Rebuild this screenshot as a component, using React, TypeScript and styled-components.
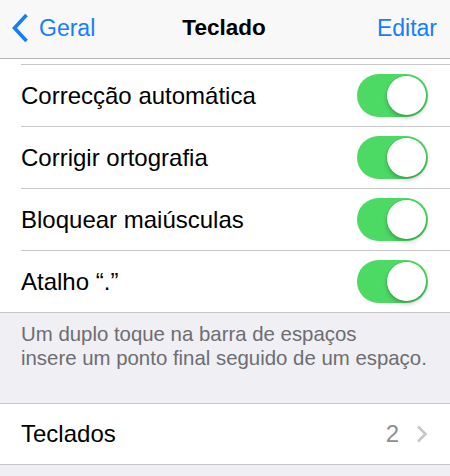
import React from 'react';
import styled, { createGlobalStyle } from 'styled-components';

const GlobalStyle = createGlobalStyle`
  html, body {
    margin: 0;
    padding: 0;
    background-color: #efeff4;
    font-family: "Liberation Sans", Arial, Helvetica, sans-serif;
    -webkit-font-smoothing: antialiased;
  }
  * {
    box-sizing: border-box;
  }
`;

const Screen = styled.div`
  width: 450px;
  height: 476px;
  display: flex;
  flex-direction: column;
  background-color: #efeff4;
  overflow: hidden;
`;

const NavBar = styled.div`
  flex: 0 0 auto;
  height: 59px;
  display: grid;
  grid-template-columns: 1fr auto 1fr;
  align-items: center;
  padding: 0 13px 2px 11px;
  background-color: #f8f8f8;
  border-bottom: 1px solid #b4b4b4;
  position: relative;
  z-index: 1;
`;

const BackButton = styled.div`
  display: flex;
  align-items: center;
  gap: 10px;
  color: #157efb;
  font-size: 23px;
`;

const NavTitle = styled.div`
  font-size: 22.5px;
  font-weight: bold;
  color: #000;
`;

const NavAction = styled.div`
  justify-self: end;
  color: #157efb;
  font-size: 23px;
`;

const ScrollArea = styled.div`
  flex: 1 1 auto;
  overflow: hidden;
`;

const ScrollContent = styled.div`
  /* list is scrolled: the first row sits mostly under the nav bar */
  margin-top: -56px;
`;

const Group = styled.div<{ $noTop?: boolean }>`
  background-color: #fff;
  border-top: ${({ $noTop }) => ($noTop ? 'none' : '1px solid #c8c7cc')};
  border-bottom: 1px solid #c8c7cc;
`;

const Row = styled.div`
  padding-left: 21px;
  background-color: #fff;
`;

const RowInner = styled.div<{ $last?: boolean; $height?: number }>`
  height: ${({ $height }) => $height ?? 62}px;
  display: flex;
  align-items: center;
  justify-content: space-between;
  padding-right: 22px;
  border-bottom: ${({ $last }) => ($last ? 'none' : '1px solid #c8c7cc')};
`;

const Label = styled.span`
  font-size: 24px;
  color: #000;
`;

const Track = styled.span<{ $on: boolean }>`
  margin-left: auto;
  width: 71px;
  height: 43px;
  border-radius: 22px;
  padding: 2px;
  display: flex;
  justify-content: ${({ $on }) => ($on ? 'flex-end' : 'flex-start')};
  align-items: center;
  background-color: ${({ $on }) => ($on ? '#4cd964' : '#e5e5ea')};
`;

const Knob = styled.span`
  width: 39px;
  height: 39px;
  border-radius: 50%;
  background-color: #fff;
  box-shadow: 0 3px 4px rgba(0, 0, 0, 0.22), 0 0 0 1px rgba(0, 0, 0, 0.05);
`;

const Footer = styled.div`
  height: 90px;
  padding: 9px 21px 0;
  font-size: 20.4px;
  line-height: 24px;
  color: #6d6d72;
`;

const Detail = styled.div`
  display: flex;
  align-items: center;
  gap: 17px;
  font-size: 24px;
  color: #8e8e93;
`;

const Toggle: React.FC<{ on: boolean }> = ({ on }) => (
  <Track $on={on}>
    <Knob />
  </Track>
);

const BackChevron = () => (
  <svg width="18" height="30" viewBox="0 0 18 30">
    <path d="M15.5 2 L3.5 15 L15.5 28" fill="none" stroke="#157efb" strokeWidth="3.6" strokeLinejoin="miter" />
  </svg>
);

const DisclosureChevron = () => (
  <svg width="12" height="18" viewBox="0 0 12 18">
    <path d="M2 1.5 L9.5 9 L2 16.5" fill="none" stroke="#c7c7cc" strokeWidth="2.6" />
  </svg>
);

// first entry is scrolled away under the nav bar; only its bottom edge shows
const switches: { label: string | null; on: boolean }[] = [
  { label: null, on: true },
  { label: 'Correcção automática', on: true },
  { label: 'Corrigir ortografia', on: true },
  { label: 'Bloquear maiúsculas', on: true },
  { label: 'Atalho “.”', on: true },
];

const App: React.FC = () => {
  return (
    <Screen>
      <GlobalStyle />
      <NavBar>
        <BackButton>
          <BackChevron />
          Geral
        </BackButton>
        <NavTitle>Teclado</NavTitle>
        <NavAction>Editar</NavAction>
      </NavBar>

      <ScrollArea>
        <ScrollContent>
          <Group $noTop>
            {switches.map((item, i) => {
              const last = i === switches.length - 1;
              return (
                <Row key={i}>
                  <RowInner $last={last} $height={last ? 61 : 62}>
                    {item.label && <Label>{item.label}</Label>}
                    <Toggle on={item.on} />
                  </RowInner>
                </Row>
              );
            })}
          </Group>

          <Footer>
            Um duplo toque na barra de espaços
            <br />
            insere um ponto final seguido de um espaço.
          </Footer>

          <Group>
            <Row>
              <RowInner $last $height={60}>
                <Label>Teclados</Label>
                <Detail>
                  2
                  <DisclosureChevron />
                </Detail>
              </RowInner>
            </Row>
          </Group>
        </ScrollContent>
      </ScrollArea>
    </Screen>
  );
};

export default App;
